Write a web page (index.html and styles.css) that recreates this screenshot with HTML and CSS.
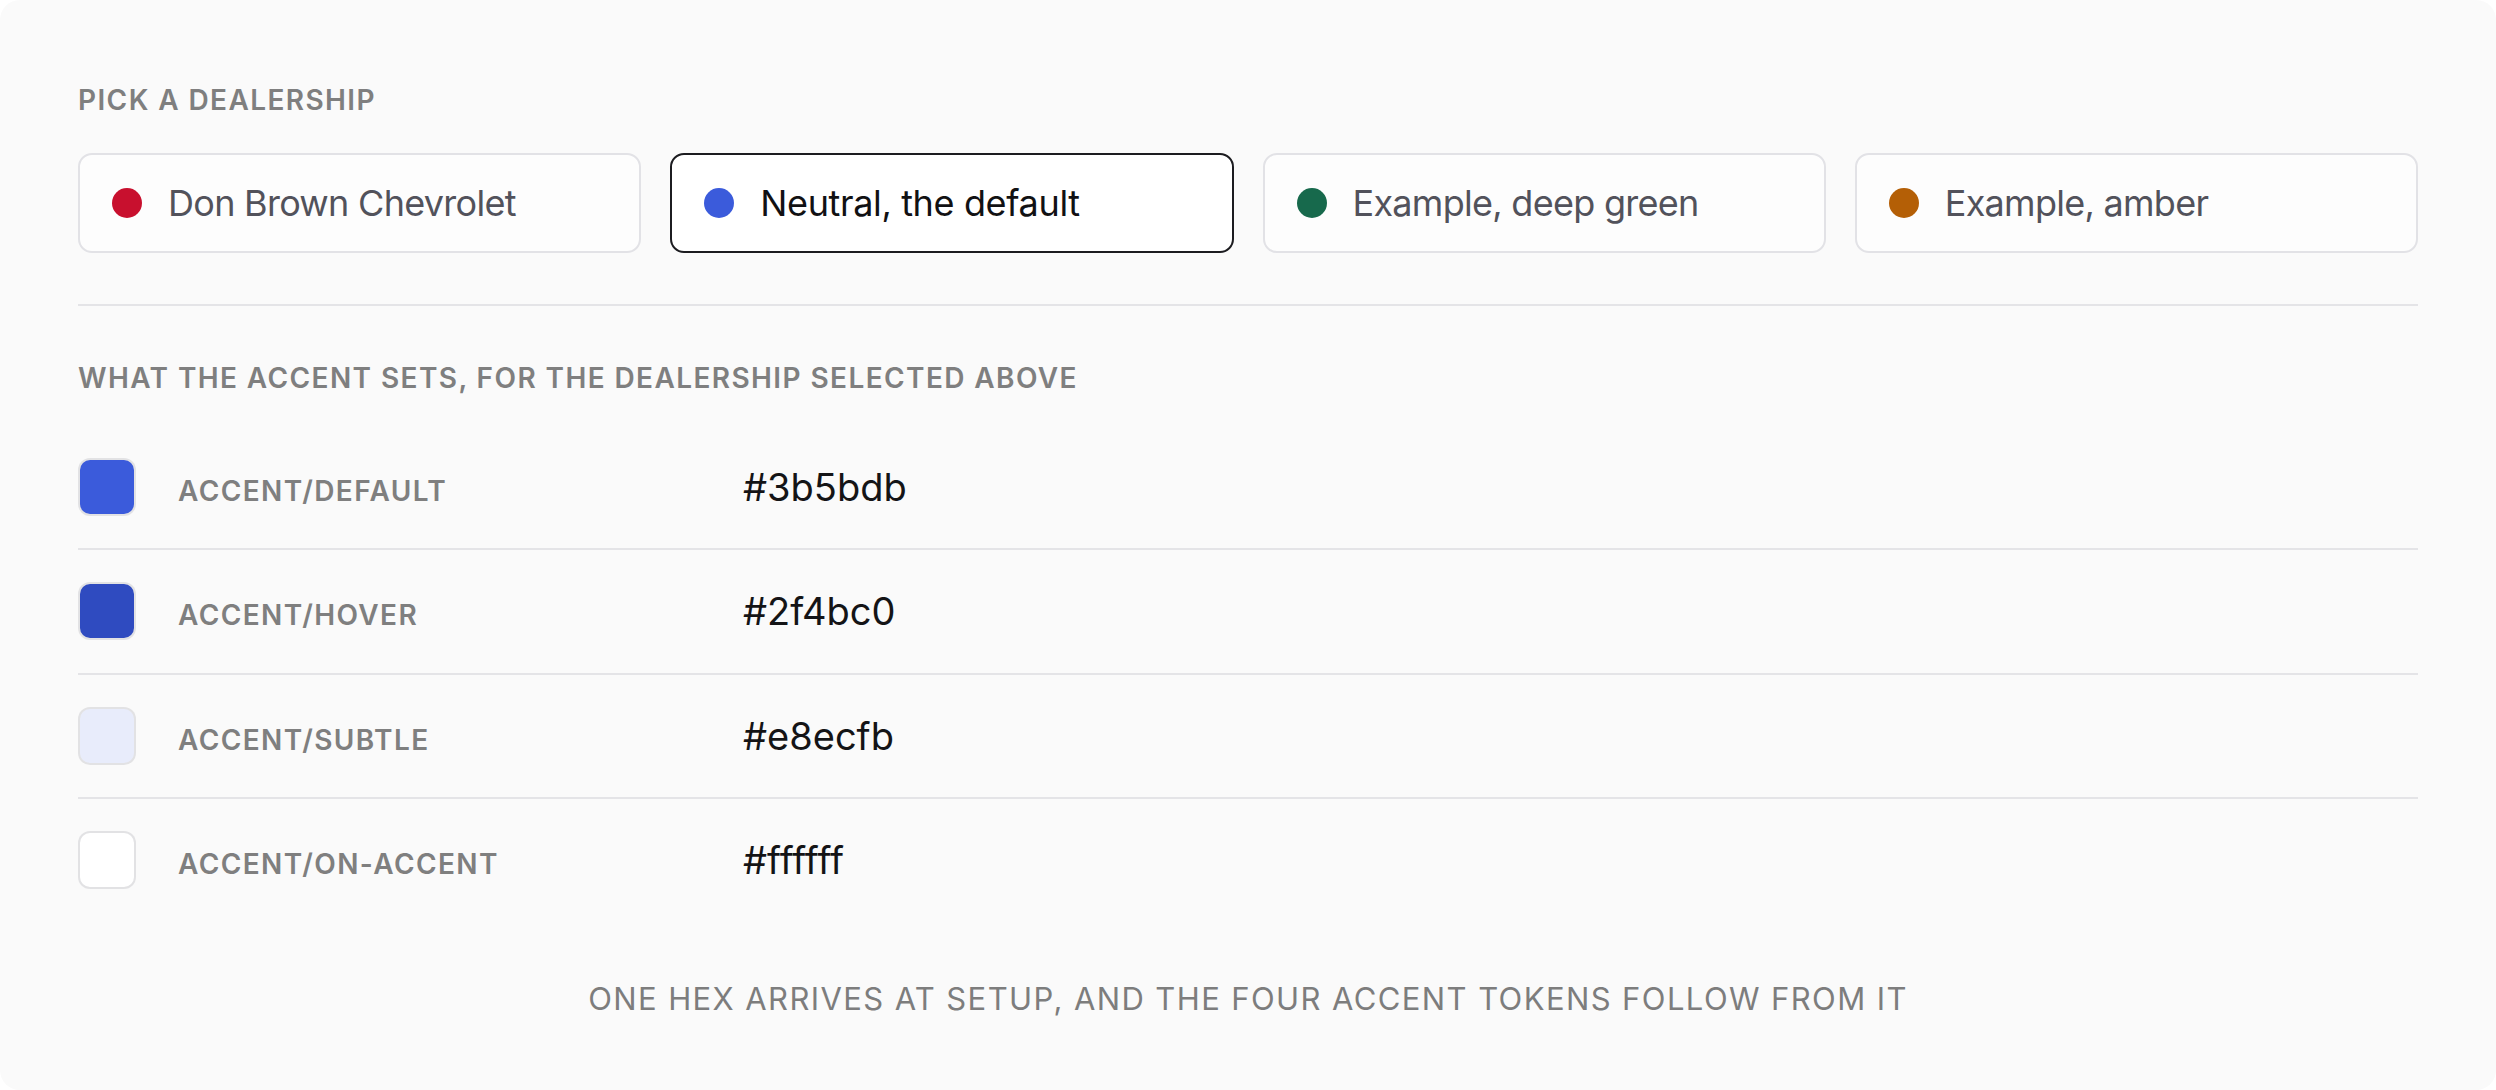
FILE: index.html
```html
<!DOCTYPE html>
<html lang="en">
<head>
<meta charset="utf-8">
<title>Dealership accent</title>
<link rel="stylesheet" href="styles.css">
</head>
<body>
<main class="panel">
  <h2 class="eyebrow">Pick a dealership</h2>
  <div class="dealers">
    <button class="dealer"><span class="dot dot-red"></span><span class="dealer-name">Don Brown Chevrolet</span></button>
    <button class="dealer is-selected"><span class="dot dot-blue"></span><span class="dealer-name">Neutral, the default</span></button>
    <button class="dealer"><span class="dot dot-green"></span><span class="dealer-name">Example, deep green</span></button>
    <button class="dealer"><span class="dot dot-amber"></span><span class="dealer-name">Example, amber</span></button>
  </div>
  <hr class="divider">
  <h2 class="eyebrow eyebrow-second">What the accent sets, for the dealership selected above</h2>
  <ul class="tokens">
    <li class="token"><span class="swatch sw-default"></span><span class="token-text"><span class="token-name">accent/default</span><span class="token-hex">#3b5bdb</span></span></li>
    <li class="token"><span class="swatch sw-hover"></span><span class="token-text"><span class="token-name">accent/hover</span><span class="token-hex">#2f4bc0</span></span></li>
    <li class="token"><span class="swatch sw-subtle"></span><span class="token-text"><span class="token-name">accent/subtle</span><span class="token-hex">#e8ecfb</span></span></li>
    <li class="token"><span class="swatch sw-on"></span><span class="token-text"><span class="token-name">accent/on-accent</span><span class="token-hex">#ffffff</span></span></li>
  </ul>
  <p class="footnote">One hex arrives at setup, and the four accent tokens follow from it</p>
</main>
</body>
</html>
```

FILE: styles.css
```css
* { box-sizing: border-box; }
html, body { margin: 0; padding: 0; }
body {
  background: #ffffff;
  font-family: Inter, "Noto Sans", "Liberation Sans", sans-serif;
  width: 2496px;
  height: 1090px;
  overflow: hidden;
}
.panel {
  background: #fafafa;
  border-radius: 20px;
  height: 1090px;
  padding: 83px 78px 0 78px;
  display: flex;
  flex-direction: column;
}
.eyebrow {
  margin: 0;
  font-size: 28px;
  line-height: 34px;
  font-weight: 600;
  letter-spacing: 0.05em;
  text-transform: uppercase;
  color: #7f7f7f;
}
.dealers {
  margin-top: 36px;
  display: grid;
  grid-template-columns: repeat(4, 1fr);
  column-gap: 29px;
}
.dealer {
  height: 100px;
  display: flex;
  align-items: center;
  gap: 26px;
  padding: 0 0 0 32px;
  background: #fdfdfd;
  border: 2px solid #e2e2e6;
  border-radius: 14px;
  font-family: inherit;
  font-size: 36px;
  letter-spacing: -0.02em;
  color: #52525b;
  text-align: left;
  cursor: pointer;
}
.dealer.is-selected {
  background: #ffffff;
  border-color: #1c1c20;
  color: #111113;
  letter-spacing: -0.01em;
}
.dot {
  width: 30px;
  height: 30px;
  border-radius: 50%;
  flex: none;
}
.dot-red { background: #c8102e; }
.dot-blue { background: #3b5bdb; }
.dot-green { background: #17694c; }
.dot-amber { background: #b45f06; }
.dealer-name { line-height: 44px; }
.divider {
  margin: 51px 0 0 0;
  border: 0;
  height: 2px;
  background: #e4e4e7;
}
.eyebrow-second { margin-top: 55px; }
.tokens {
  list-style: none;
  margin: 30.5px 0 0 0;
  padding: 0;
}
.token {
  display: grid;
  grid-template-columns: 58px 1fr;
  column-gap: 42px;
  align-items: center;
  padding: 32px 0 32.5px 0;
  border-bottom: 2px solid #e4e4e7;
}
.token:last-child { border-bottom: 0; }
.swatch {
  width: 58px;
  height: 58px;
  border-radius: 12px;
  border: 2px solid rgba(24, 24, 40, 0.1);
  background-clip: padding-box;
}
.sw-default { background-color: #3b5bdb; }
.sw-hover { background-color: #2f4bc0; }
.sw-subtle { background-color: #e8ecfb; }
.sw-on { background-color: #ffffff; }
.token-text {
  display: grid;
  grid-template-columns: 523px 1fr;
  column-gap: 42px;
  align-items: baseline;
}
.token-name {
  font-size: 28px;
  font-weight: 600;
  letter-spacing: 0.05em;
  text-transform: uppercase;
  color: #7f7f7f;
}
.token-hex {
  font-size: 38px;
  line-height: 46px;
  color: #141416;
}
.footnote {
  margin: 58px 0 0 0;
  text-align: center;
  font-size: 31px;
  line-height: 38px;
  letter-spacing: 0.045em;
  text-transform: uppercase;
  color: #7d7d7d;
}
```
